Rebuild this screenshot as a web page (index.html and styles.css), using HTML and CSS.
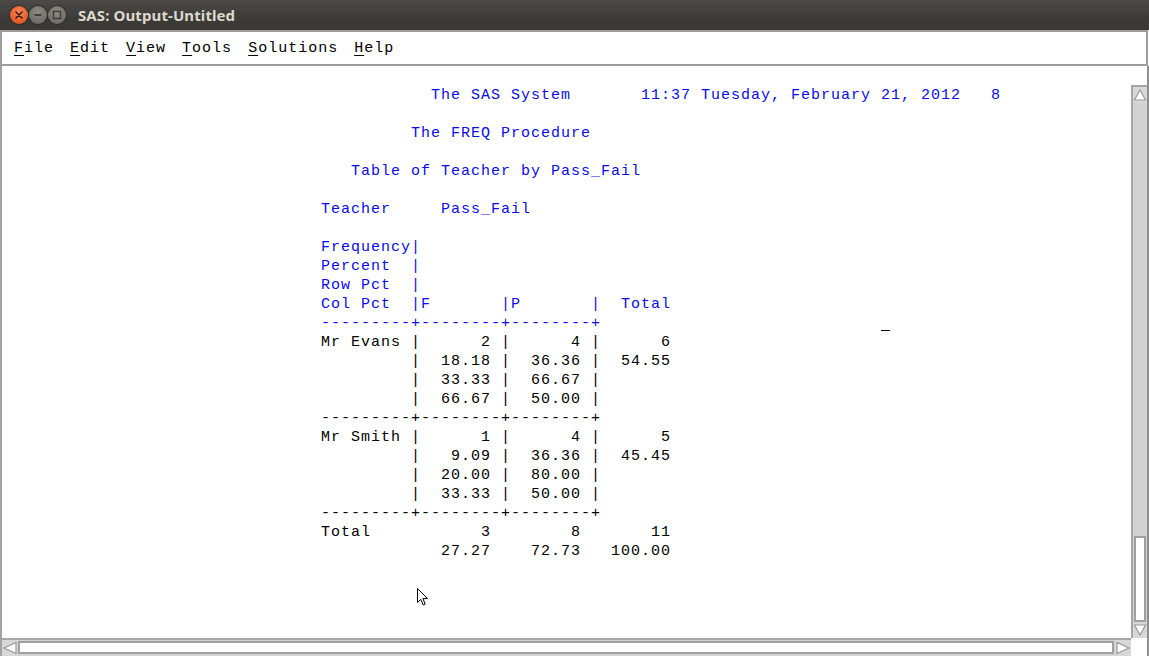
FILE: index.html
```html
<!DOCTYPE html>
<html>
<head>
<meta charset="utf-8">
<title>SAS: Output-Untitled</title>
<link rel="stylesheet" href="styles.css">
</head>
<body>
<div class="window">
  <div class="titlebar">
    <div class="wbtns">
      <span class="wbtn close"><svg width="18" height="18" viewBox="0 0 18 18"><path d="M6 6 L12 12 M12 6 L6 12" stroke="#3a1a0e" stroke-width="1.6" stroke-linecap="round"/></svg></span>
      <span class="wbtn"><svg width="18" height="18" viewBox="0 0 18 18"><path d="M5.5 9 H12.5" stroke="#3b3a36" stroke-width="1.8"/></svg></span>
      <span class="wbtn"><svg width="18" height="18" viewBox="0 0 18 18"><rect x="5.5" y="5.5" width="7" height="7" fill="none" stroke="#3b3a36" stroke-width="1.4"/></svg></span>
    </div>
    <span class="title">SAS: Output-Untitled</span>
  </div>
  <div class="menubar">
    <span class="menu"><u>F</u>ile</span>
    <span class="menu"><u>E</u>dit</span>
    <span class="menu"><u>V</u>iew</span>
    <span class="menu"><u>T</u>ools</span>
    <span class="menu"><u>S</u>olutions</span>
    <span class="menu"><u>H</u>elp</span>
  </div>
  <div class="main">
    <div class="output">
<pre class="listing"><span class="blue">           The SAS System       11:37 Tuesday, February 21, 2012   8

         The FREQ Procedure

   Table of Teacher by Pass_Fail

Teacher     Pass_Fail

Frequency|
Percent  |
Row Pct  |
Col Pct  |F       |P       |  Total
---------+--------+--------+</span>
Mr Evans |      2 |      4 |      6
         |  18.18 |  36.36 |  54.55
         |  33.33 |  66.67 |
         |  66.67 |  50.00 |
---------+--------+--------+
Mr Smith |      1 |      4 |      5
         |   9.09 |  36.36 |  45.45
         |  20.00 |  80.00 |
         |  33.33 |  50.00 |
---------+--------+--------+
Total           3        8       11
            27.27    72.73   100.00</pre>
      <span class="textcursor"></span>
      <svg class="pointer" width="14" height="20" viewBox="0 0 14 20"><path d="M1.5 1.5 L1.5 15.5 L4.8 12.4 L7.2 18 L9.2 17.1 L6.9 11.6 L11.5 11.6 Z" fill="#fff" stroke="#000" stroke-width="1" stroke-linejoin="round"/></svg>
    </div>
    <div class="vscroll">
      <div class="sbtn up"><svg width="14" height="16" viewBox="0 0 14 16"><polygon points="7,3 12.5,13 1.5,13" fill="#fff" stroke="#9a9a9a" stroke-width="1.2"/></svg></div>
      <div class="vtrack"><div class="vthumb"></div></div>
      <div class="sbtn down"><svg width="14" height="14" viewBox="0 0 14 14"><polygon points="1.5,2 12.5,2 7,12" fill="#fff" stroke="#9a9a9a" stroke-width="1.2"/></svg></div>
    </div>
    <div class="hscroll">
      <div class="sbtn left"><svg width="16" height="14" viewBox="0 0 16 14"><polygon points="2,7 14,1.5 14,12.5" fill="#fff" stroke="#9a9a9a" stroke-width="1.2"/></svg></div>
      <div class="htrack"><div class="hthumb"></div></div>
      <div class="sbtn right"><svg width="16" height="14" viewBox="0 0 16 14"><polygon points="14,7 2,1.5 2,12.5" fill="#fff" stroke="#9a9a9a" stroke-width="1.2"/></svg></div>
    </div>
    <div class="corner"></div>
  </div>
</div>
</body>
</html>
```
FILE: styles.css
```css
html, body {
  margin: 0;
  padding: 0;
}
body {
  width: 1149px;
  height: 656px;
  overflow: hidden;
  background: #ffffff;
  font-family: "Liberation Mono", "DejaVu Sans Mono", monospace;
}
.window {
  display: flex;
  flex-direction: column;
  height: 656px;
}
.titlebar {
  height: 30px;
  flex: 0 0 30px;
  background: linear-gradient(#4b4a46, #3c3b37 60%, #393834);
  display: flex;
  align-items: center;
  padding-left: 10px;
  box-sizing: border-box;
}
.wbtns {
  display: flex;
  gap: 1px;
  align-items: center;
}
.wbtn {
  width: 18px;
  height: 18px;
  border-radius: 50%;
  background: radial-gradient(circle at 50% 35%, #8c8b86, #6f6e69 70%, #5c5b57);
  box-shadow: 0 0 0 1px #2e2d2a;
  display: flex;
}
.wbtn.close {
  background: radial-gradient(circle at 50% 35%, #f7875a, #e8602c 60%, #cc4a18);
}
.title {
  margin-left: 12px;
  font-family: "Noto Sans", "DejaVu Sans", sans-serif;
  font-weight: bold;
  font-size: 15px;
  color: #dcd8cf;
  letter-spacing: 0.1px;
}
.menubar {
  height: 36px;
  flex: 0 0 36px;
  box-sizing: border-box;
  margin-right: 1px;
  border: 2px solid #9c9c9c;
  background: #ffffff;
  display: flex;
  align-items: center;
  gap: 16px;
  padding-left: 12px;
  padding-top: 1px;
}
.menu {
  font-size: 15px;
  letter-spacing: 1px;
  color: #000;
}
.menu u {
  text-underline-offset: 3px;
}
.main {
  flex: 1;
  display: grid;
  grid-template-columns: 1fr 16px;
  grid-template-rows: 1fr 18px;
  border-left: 2px solid #a3a3a3;
  border-right: 2px solid #8f8f8f;
  min-height: 0;
}
.output {
  position: relative;
  overflow: hidden;
  background: #fff;
}
.listing {
  margin: 0;
  padding: 20px 0 0 319px;
  font-family: "Liberation Mono", "DejaVu Sans Mono", monospace;
  font-size: 15px;
  line-height: 19px;
  letter-spacing: 1px;
  color: #000;
}
.blue {
  color: #0a0af0;
}
.textcursor {
  position: absolute;
  left: 879px;
  top: 264px;
  width: 9px;
  height: 1px;
  background: #000;
}
.pointer {
  position: absolute;
  left: 414px;
  top: 521px;
}
.vscroll {
  margin-top: 19px;
  display: flex;
  flex-direction: column;
  background: #d6d6d6;
  border-left: 2px solid #a6a6a6;
  box-sizing: border-box;
}
.sbtn {
  display: flex;
  align-items: center;
  justify-content: center;
  background: #d8d8d8;
}
.sbtn.up {
  height: 18px;
  border-top: 2px solid #a6a6a6;
  box-sizing: border-box;
}
.sbtn.down {
  height: 16px;
}
.vtrack {
  flex: 1;
  display: flex;
  flex-direction: column;
  justify-content: flex-end;
  background: #d3d3d3;
}
.vthumb {
  height: 86px;
  margin: 0 1px 0 1px;
  background: #ffffff;
  border: 2px solid #a0a0a0;
  box-sizing: border-box;
}
.hscroll {
  display: flex;
  background: #d6d6d6;
  border-top: 2px solid #a6a6a6;
  box-sizing: border-box;
}
.sbtn.left, .sbtn.right {
  width: 16px;
}
.htrack {
  flex: 1;
  display: flex;
  padding: 1px 1px 2px 0;
  background: #d3d3d3;
}
.hthumb {
  flex: 1;
  background: #ffffff;
  border: 2px solid #a0a0a0;
  box-sizing: border-box;
}
.corner {
  background: #ffffff;
}
```
